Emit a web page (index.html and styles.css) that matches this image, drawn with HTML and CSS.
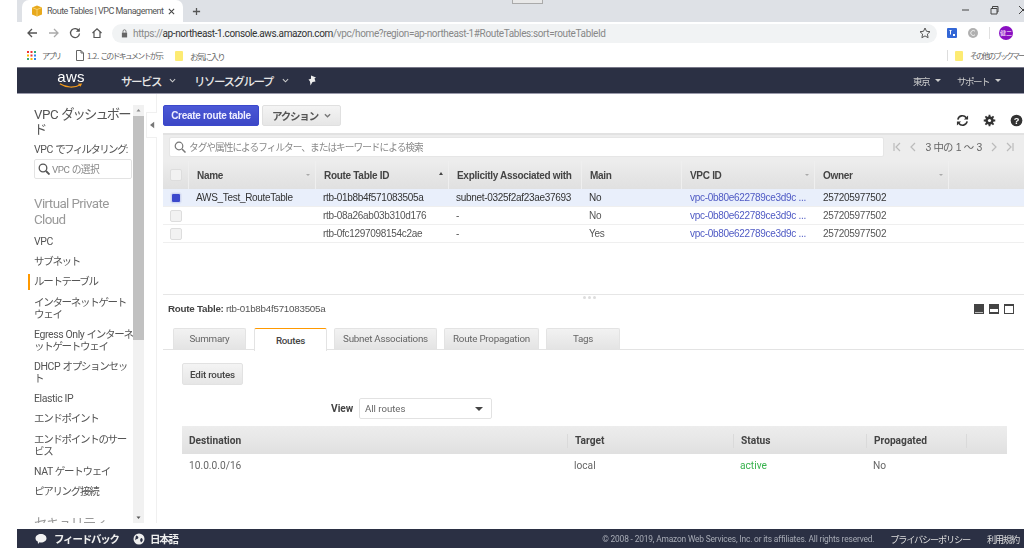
FILE: index.html
```html
<!DOCTYPE html>
<html lang="ja">
<head>
<meta charset="utf-8">
<title>Route Tables | VPC Management Console</title>
<link rel="stylesheet" href="styles.css">
</head>
<body>
<div class="page">
  <div class="tabstrip">
    <div class="tab">
      <svg class="favicon" viewBox="0 0 12 12"><path d="M6 .5 11 2.500v7L6 11.500 1 9.500v-7z" fill="#e8a91c"/><path d="M6 4.500v7M1 2.500l5 2 5-2" stroke="#fbe08c" stroke-width=".7" fill="none"/></svg>
      <span class="tab-title">Route Tables | VPC Management</span>
      <svg class="tab-x" viewBox="0 0 8 8"><path d="M1 1l6 6M7 1 1 7" stroke="#444" stroke-width="1.200"/></svg>
    </div>
    <svg class="newtab" viewBox="0 0 10 10"><path d="M5 1v8M1 5h8" stroke="#555" stroke-width="1.400"/></svg>
    <div class="winbtns">
      <svg class="winbtn" viewBox="0 0 10 10"><path d="M2 5h7" stroke="#444"/></svg>
      <svg class="winbtn" viewBox="0 0 10 10"><path d="M2 3.500h6v5.500H2zM3.500 3.500V1.500h5.500v5.500H8" stroke="#444" fill="none"/></svg>
      <svg class="winbtn" viewBox="0 0 10 10"><path d="M1 1l8 8M9 1 1 9" stroke="#444"/></svg>
    </div>
    <div class="artifact"></div>
  </div>
  <div class="toolbar">
    <svg class="tool" viewBox="0 0 12 12"><path d="M11 6H2M6 2 2 6l4 4" stroke="#555" stroke-width="1.300" fill="none"/></svg>
    <svg class="tool" viewBox="0 0 12 12"><path d="M1 6h9M6 2l4 4-4 4" stroke="#aaa" stroke-width="1.300" fill="none"/></svg>
    <svg class="tool" viewBox="0 0 12 12"><path d="M10 4a4.500 4.500 0 1 0 .5 2.500" stroke="#555" stroke-width="1.300" fill="none"/><path d="M10.800 .8v4h-4z" fill="#555"/></svg>
    <svg class="tool" viewBox="0 0 12 12"><path d="M1.500 6 6 1.800 10.500 6M3 5v5.500h6V5" stroke="#555" stroke-width="1.200" fill="none"/></svg>
    <div class="omnibox">
      <svg class="lock" viewBox="0 0 8 10"><path d="M1 4h6v5.500H1z" fill="#666"/><path d="M2.300 4V2.500a1.700 1.700 0 0 1 3.400 0V4" stroke="#666" fill="none"/></svg>
      <span class="url">https://<b>ap-northeast-1.console.aws.amazon.com</b>/vpc/home?region=ap-northeast-1#RouteTables:sort=routeTableId</span>
      <svg class="star" viewBox="0 0 12 12"><path d="M6 1l1.500 3.300 3.500.4-2.600 2.400.7 3.600L6 8.900l-3.100 1.800.7-3.600L1 4.700l3.500-.4z" stroke="#555" fill="none"/></svg>
    </div>
    <svg class="ext" viewBox="0 0 10 10"><rect width="10" height="10" rx="1" fill="#3367d6"/><path d="M2.500 2h2v1H4v3.500H3V3h-.5zM6 6h2v2H6z" fill="#fff"/></svg>
    <svg class="ext ext-grey" viewBox="0 0 10 10"><circle cx="5" cy="5" r="5" fill="#b0b0b0"/><path d="M7 3.200A2.500 2.500 0 1 0 7 6.800" stroke="#eee" fill="none"/></svg>
    <div class="tool-sep"></div>
    <div class="avatar">健二</div>
  </div>
  <div class="bookmarks">
    <svg class="apps" viewBox="0 0 9 9"><rect width="2" height="2" fill="#e33"/><rect x="3.500" width="2" height="2" fill="#e33"/><rect x="7" width="2" height="2" fill="#3a7"/><rect y="3.500" width="2" height="2" fill="#fb0"/><rect x="3.500" y="3.500" width="2" height="2" fill="#e33"/><rect x="7" y="3.500" width="2" height="2" fill="#38e"/><rect y="7" width="2" height="2" fill="#3a7"/><rect x="3.500" y="7" width="2" height="2" fill="#fb0"/><rect x="7" y="7" width="2" height="2" fill="#38e"/></svg>
    <span class="bm bm-apps">アプリ</span>
    <svg class="bm-doc" viewBox="0 0 8 11"><path d="M.5.500h4.500l2.500 2.500v7.500h-7zM5 .5V3h2.500" stroke="#666" fill="none"/></svg>
    <span class="bm bm-doc-text"><span class="lat">1.2. </span>このドキュメントが示</span>
    <div class="folder"></div>
    <span class="bm">お気に入り</span>
    <div class="bm-right">
      <div class="bm-sep"></div>
      <div class="folder"></div>
      <span class="bm bm-other">その他のブックマーク</span>
    </div>
  </div>
  <nav class="awsnav">
    <div class="logo">
      <span class="logo-text">aws</span>
      <svg class="smile" viewBox="0 0 28 7"><path d="M1 1c7 4.500 17 5 24 1" stroke="#f59b1c" stroke-width="1.400" fill="none"/><path d="M22 .8l5-.3-2 4z" fill="#f59b1c"/></svg>
    </div>
    <span class="nav-item nav-services">サービス</span><svg class="chev" viewBox="0 0 8 5"><path d="M1 1l3 3 3-3" stroke="#ccc" stroke-width="1.200" fill="none"/></svg>
    <span class="nav-item nav-res">リソースグループ</span><svg class="chev" viewBox="0 0 8 5"><path d="M1 1l3 3 3-3" stroke="#ccc" stroke-width="1.200" fill="none"/></svg>
    <svg class="pin" viewBox="0 0 10 11"><path d="M3 .5l5 2-1.500 1 1 3-3 .5-2 3.500-.5-4-1.500-2 2.500-.8z" fill="#eee"/></svg>
    <div class="nav-right">
      <span class="nav-small">東京</span><span class="caret"></span>
      <span class="nav-small nav-support">サポート</span><span class="caret"></span>
    </div>
  </nav>
  <div class="main">
    <aside class="sidebar">
      <div class="side-scroll">
        <div class="side-title"><span class="lat">VPC </span>ダッシュボー<br>ド</div>
        <div class="side-filter"><span class="lat">VPC </span>でフィルタリング:</div>
        <div class="side-input">
          <svg class="side-search" viewBox="0 0 12 12"><circle cx="5" cy="5" r="3.800" stroke="#555" stroke-width="1.300" fill="none"/><path d="M8 8l3.500 3.500" stroke="#555" stroke-width="1.800"/></svg>
          <span><span class="lat">VPC </span>の選択</span>
        </div>
        <div class="side-head">Virtual Private<br>Cloud</div>
        <a class="side-item si-first"><span class="lat">VPC</span></a>
        <a class="side-item">サブネット</a>
        <a class="side-item active">ルートテーブル</a>
        <a class="side-item">インターネットゲート<br>ウェイ</a>
        <a class="side-item"><span class="lat">Egress Only </span>インターネ<br>ットゲートウェイ</a>
        <a class="side-item"><span class="lat">DHCP </span>オプションセッ<br>ト</a>
        <a class="side-item"><span class="lat">Elastic IP</span></a>
        <a class="side-item">エンドポイント</a>
        <a class="side-item">エンドポイントのサー<br>ビス</a>
        <a class="side-item"><span class="lat">NAT </span>ゲートウェイ</a>
        <a class="side-item">ピアリング接続</a>
        <div class="side-head side-sec">セキュリティ</div>
      </div>
      <div class="scrollbar">
        <svg class="sb-arrow" viewBox="0 0 11 11"><path d="M3.500 6.500 5.500 4l2 2.500z" fill="#888"/></svg>
        <div class="sb-track"><div class="sb-thumb"></div></div>
        <svg class="sb-arrow" viewBox="0 0 11 11"><path d="M3.500 4.500 5.500 7l2-2.500z" fill="#555"/></svg>
      </div>
    </aside>
    <div class="gutter">
      <div class="collapse"><svg viewBox="0 0 6 8"><path d="M5 0v8L0 4z" fill="#777"/></svg></div>
    </div>
    <section class="content">
      <div class="actions">
        <button class="btn-primary">Create route table</button>
        <button class="btn-action">アクション<svg viewBox="0 0 8 5"><path d="M1 1l3 3 3-3" stroke="#777" stroke-width="1.500" fill="none"/></svg></button>
        <div class="top-icons">
          <svg viewBox="0 0 14 14"><path d="M2 6a5 5 0 0 1 9-2M12 8a5 5 0 0 1-9 2" stroke="#333" stroke-width="1.700" fill="none"/><path d="M13 1.500v4.500H8.500zM1 12.500V8h4.500z" fill="#333"/></svg>
          <svg viewBox="0 0 14 14"><circle cx="7" cy="7" r="3.200" stroke="#333" stroke-width="2.600" fill="none"/><path d="M7 .8v12.400M.8 7h12.400M2.600 2.600l8.800 8.800M11.400 2.600l-8.800 8.800" stroke="#333" stroke-width="2"/><circle cx="7" cy="7" r="1.700" fill="#fff"/></svg>
          <svg viewBox="0 0 14 14"><circle cx="7" cy="7" r="6.300" fill="#333"/><text class="help-q" x="7" y="10.500" text-anchor="middle">?</text></svg>
        </div>
      </div>
      <div class="filterbar">
        <div class="search">
          <svg viewBox="0 0 12 12"><circle cx="5" cy="5" r="3.800" stroke="#777" stroke-width="1.200" fill="none"/><path d="M8 8l3.500 3.500" stroke="#777" stroke-width="1.500"/></svg>
          <span>タグや属性によるフィルター、またはキーワードによる検索</span>
        </div>
        <div class="pager">
          <svg viewBox="0 0 8 10"><path d="M1 1v8M7 1 3 5l4 4" stroke="#bbb" stroke-width="1.200" fill="none"/></svg>
          <svg viewBox="0 0 8 10"><path d="M6 1 2 5l4 4" stroke="#bbb" stroke-width="1.200" fill="none"/></svg>
          <span>3 中の 1 ～ 3</span>
          <svg viewBox="0 0 8 10"><path d="M2 1l4 4-4 4" stroke="#bbb" stroke-width="1.200" fill="none"/></svg>
          <svg viewBox="0 0 8 10"><path d="M7 1v8M1 1l4 4-4 4" stroke="#bbb" stroke-width="1.200" fill="none"/></svg>
        </div>
      </div>
      <div class="grid grid-head">
        <div class="cell cell-check"><span class="check"></span></div>
        <div class="cell">Name<i class="sort"></i></div>
        <div class="cell">Route Table ID<i class="sort up"></i></div>
        <div class="cell">Explicitly Associated with</div>
        <div class="cell">Main</div>
        <div class="cell">VPC ID<i class="sort"></i></div>
        <div class="cell">Owner<i class="sort"></i></div>
        <div class="cell"></div>
      </div>
      <div class="grid grid-row selected">
        <div class="cell cell-check"><span class="check on"></span></div>
        <div class="cell">AWS_Test_RouteTable</div>
        <div class="cell">rtb-01b8b4f571083505a</div>
        <div class="cell">subnet-0325f2af23ae37693</div>
        <div class="cell">No</div>
        <div class="cell link">vpc-0b80e622789ce3d9c ...</div>
        <div class="cell owner">257205977502</div>
        <div class="cell"></div>
      </div>
      <div class="grid grid-row">
        <div class="cell cell-check"><span class="check"></span></div>
        <div class="cell"></div>
        <div class="cell">rtb-08a26ab03b310d176</div>
        <div class="cell">-</div>
        <div class="cell">No</div>
        <div class="cell link">vpc-0b80e622789ce3d9c ...</div>
        <div class="cell owner">257205977502</div>
        <div class="cell"></div>
      </div>
      <div class="grid grid-row">
        <div class="cell cell-check"><span class="check"></span></div>
        <div class="cell"></div>
        <div class="cell">rtb-0fc1297098154c2ae</div>
        <div class="cell">-</div>
        <div class="cell">Yes</div>
        <div class="cell link">vpc-0b80e622789ce3d9c ...</div>
        <div class="cell owner">257205977502</div>
        <div class="cell"></div>
      </div>
      <div class="splitter"><span class="dots"><i></i><i></i><i></i></span></div>
      <div class="detail-head">
        <div class="detail-title"><b>Route Table:</b> rtb-01b8b4f571083505a</div>
        <div class="panes">
          <span class="pane p1"></span><span class="pane p2"></span><span class="pane p3"></span>
        </div>
      </div>
      <div class="tabs">
        <a class="dtab t1">Summary</a>
        <a class="dtab t2 current">Routes</a>
        <a class="dtab t3">Subnet Associations</a>
        <a class="dtab t4">Route Propagation</a>
        <a class="dtab t5">Tags</a>
      </div>
      <div class="panel">
        <button class="btn-edit">Edit routes</button>
        <div class="view-row">
          <span class="view-label">View</span>
          <div class="select"><span>All routes</span><i class="select-caret"></i></div>
        </div>
        <div class="rgrid rgrid-head">
          <div>Destination</div><div>Target</div><div>Status</div><div>Propagated</div><div></div>
        </div>
        <div class="rgrid rgrid-row">
          <div>10.0.0.0/16</div><div>local</div><div class="ok">active</div><div>No</div><div></div>
        </div>
      </div>
    </section>
  </div>
  <footer class="footer">
    <svg class="foot-icon" viewBox="0 0 12 12"><path d="M6 1c3 0 5.500 1.800 5.500 4.300S9 9.500 6 9.500c-.6 0-1 0-1.500-.2L3 11l-.2-2.400C1.300 7.800.5 6.700.5 5.300.5 2.800 3 1 6 1z" fill="#f2f2f2"/></svg>
    <span class="foot-link">フィードバック</span>
    <svg class="foot-icon foot-globe" viewBox="0 0 12 12"><circle cx="6" cy="6" r="5.500" fill="#eee"/><path d="M3 2.500c2 .5 3 1.500 2 3-1 1-2.500.5-3 2M8 5c1.500 0 2 1.500 1.500 3L8 9.500 7 7z" fill="#2b3044"/></svg>
    <span class="foot-link foot-lang">日本語</span>
    <div class="foot-right">
      <span class="copy">© 2008 - 2019, Amazon Web Services, Inc. or its affiliates. All rights reserved.</span>
      <span class="foot-legal">プライバシーポリシー</span>
      <span class="foot-legal">利用規約</span>
    </div>
  </footer>
</div>
</body>
</html>
```
FILE: styles.css
```css
* { box-sizing: border-box; }
html, body { margin: 0; padding: 0; width: 1024px; height: 549px; overflow: hidden; background: #fff; }
body { font-family: "Liberation Sans", "Noto Sans CJK JP", sans-serif; color: #444; }
button { font-family: inherit; padding: 0; cursor: pointer; }
a { display: block; }
i { font-style: normal; }
.lat { letter-spacing: -.4px; }

.page { width: 1024px; height: 549px; padding: 0 0 1px 17px; display: flex; flex-direction: column; filter: blur(.5px); }

/* browser chrome */
.tabstrip { position: relative; height: 22px; flex: none; background: #dee1e6; display: flex; align-items: center; padding-left: 5px; }
.tab { width: 161px; height: 22px; background: #fff; border-radius: 7px 7px 0 0; display: flex; align-items: center; padding-left: 9px; }
.favicon { width: 12px; height: 12px; flex: none; }
.tab-title { width: 114px; margin-left: 4px; font: 9px "Roboto", sans-serif; letter-spacing: -.5px; color: #555; white-space: nowrap; flex: none; }
.tab-x { width: 7px; height: 7px; margin-left: 7px; }
.newtab { width: 9px; height: 9px; margin-left: 9px; }
.winbtns { margin-left: auto; display: flex; gap: 19px; margin-right: -4px; padding-bottom: 2px; }
.winbtn { width: 10px; height: 10px; }
.artifact { position: absolute; left: 495px; top: -1px; width: 31px; height: 5px; border: 1px solid #aaa; background: #e8e8e8; }

.toolbar { height: 22px; flex: none; background: #fff; display: flex; align-items: center; padding-left: 9px; }
.tool { width: 12px; height: 12px; margin-right: 9.500px; flex: none; }
.omnibox { width: 825px; height: 19px; background: #f1f3f4; border-radius: 10px; display: flex; align-items: center; padding-left: 9px; flex: none; }
.lock { width: 7px; height: 9px; flex: none; }
.url { margin-left: 5px; font: 10px "Roboto", sans-serif; letter-spacing: -.37px; color: #888; white-space: nowrap; }
.url b { font-weight: 400; color: #333; }
.star { width: 12px; height: 12px; margin-left: auto; margin-right: 6px; }
.ext { width: 10px; height: 10px; flex: none; margin-left: 10px; }
.ext-grey { margin-left: 11px; }
.tool-sep { width: 1px; height: 12px; margin-left: 11px; background: #e0e0e0; }
.avatar { width: 14px; height: 14px; margin-left: 9px; border-radius: 50%; background: #8a0fc2; color: #fff; font-size: 6px; line-height: 14px; text-align: center; }

.bookmarks { height: 23px; flex: none; background: #fff; display: flex; align-items: center; padding-left: 10px; }
.apps { width: 9px; height: 9px; flex: none; }
.bm { font: 8.500px "Noto Sans CJK JP", sans-serif; letter-spacing: -1.700px; color: #666; white-space: nowrap; }
.bm-apps { margin-left: 6px; width: 18px; font-size: 8px; letter-spacing: -2px; }
.bm-doc { width: 8px; height: 11px; margin-left: 16px; flex: none; }
.bm-doc-text { width: 74px; margin-left: 3px; margin-right: 14px; font-size: 8px; letter-spacing: -1.800px; }
.folder { width: 8px; height: 10px; background: #fdeb72; border-radius: 1px; margin-right: 7px; flex: none; }
.bm-right { margin-left: auto; display: flex; align-items: center; overflow: hidden; width: 77px; }
.bm-sep { width: 1px; height: 11px; background: #ddd; margin-right: 7px; flex: none; }
.bm-other { font-size: 8px; letter-spacing: -2px; }

/* AWS nav */
.awsnav { height: 27px; flex: none; background: #2b3044; border-top: 1px solid #778; border-bottom: 1px solid #99a; display: flex; align-items: center; padding-left: 40px; color: #eee; }
.logo { width: 28px; display: flex; flex-direction: column; align-items: center; position: relative; top: -1px; }
.logo-text { font: 15px/12px "Liberation Sans", sans-serif; color: #fff; letter-spacing: .2px; }
.smile { width: 28px; height: 6px; display: block; }
.nav-item { font-size: 11.500px; letter-spacing: -1.500px; font-weight: 500; color: #e6e6e6; white-space: nowrap; }
.nav-services { margin-left: 36px; width: 40px; }
.nav-res { margin-left: 18px; width: 80px; }
.chev { width: 7px; height: 5px; margin-left: 8px; flex: none; }
.pin { width: 10px; height: 11px; margin-left: 19px; }
.nav-right { margin-left: auto; display: flex; align-items: center; padding-right: 23px; }
.nav-small { font-size: 9.500px; letter-spacing: -1.500px; color: #ccc; white-space: nowrap; }
.nav-support { margin-left: 16px; }
.caret { width: 0; height: 0; border: 3px solid transparent; border-top: 3px solid #ccc; border-bottom: 0; margin-left: 6px; }

/* main layout */
.main { flex: 1; min-height: 0; display: flex; }
.sidebar { width: 127px; flex: none; display: flex; padding: 11px 0 6px; }
.side-scroll { width: 116px; overflow: hidden; padding-left: 17px; font-family: "Roboto", "Noto Sans CJK JP", sans-serif; color: #555; }
.side-title { font-size: 13.300px; letter-spacing: -1.900px; line-height: 15px; margin-top: 2px; white-space: nowrap; }
.side-filter { font-size: 10.500px; letter-spacing: -1.650px; line-height: 14px; margin-top: 6px; white-space: nowrap; }
.side-input { width: 98px; height: 20px; margin-top: 2px; border: 1px solid #e3e3e3; border-radius: 2px; display: flex; align-items: center; padding-left: 3px; font-size: 9.800px; letter-spacing: -.6px; color: #888; white-space: nowrap; }
.side-search { width: 12px; height: 12px; margin-right: 2px; flex: none; }
.side-head { font-size: 13.400px; letter-spacing: -.6px; line-height: 15.500px; color: #999; margin-top: 17px; white-space: nowrap; }
.side-sec { margin-top: 18px; letter-spacing: -1.200px; }
.side-item { position: relative; font-size: 10.500px; letter-spacing: -1.300px; line-height: 12px; margin-top: 8.200px; white-space: nowrap; }
.si-first { margin-top: 9px; }
.side-item.active::before { content: ""; position: absolute; left: -6px; top: -2px; width: 2px; height: 16px; background: #f90; }

.scrollbar { width: 11px; flex: none; background: #f1f1f1; display: flex; flex-direction: column; }
.sb-arrow { width: 11px; height: 11px; flex: none; display: block; }
.sb-track { flex: 1; }
.sb-thumb { height: 224px; background: #c1c1c1; }

.gutter { width: 19px; flex: none; position: relative; }
.gutter::after { content: ""; position: absolute; right: 6px; top: 0; bottom: 6px; width: 1px; background: #f0f0f0; }
.collapse { position: absolute; left: 2px; top: 18px; width: 11px; height: 26px; background: #fff; border: 1px solid #f0f0f0; border-right: 0; display: flex; align-items: center; justify-content: center; z-index: 1; }
.collapse svg { width: 5px; height: 8px; }

.content { flex: 1; min-width: 0; display: flex; flex-direction: column; }
.actions { height: 39px; flex: none; padding-top: 11px; display: flex; align-items: flex-start; }
.btn-primary { width: 96px; height: 21px; border: 1px solid #3b48cc; border-radius: 2px; background: linear-gradient(#4b58d6, #3c47c6); color: #eef; font-size: 10px; letter-spacing: -.3px; font-weight: 700; }
.btn-action { width: 79px; height: 21px; margin-left: 3px; border: 1px solid #e0e0e0; border-radius: 2px; background: linear-gradient(#f4f4f4, #e6e6e6); color: #555; font-size: 10.500px; letter-spacing: -1.200px; font-weight: 700; display: flex; align-items: center; justify-content: center; gap: 6px; }
.btn-action svg { width: 7px; height: 5px; }
.top-icons { margin-left: auto; display: flex; gap: 14px; padding: 9px 1px 0 0; }
.top-icons svg { width: 13px; height: 13px; }
.help-q { font: 700 10px "Liberation Sans", sans-serif; fill: #fff; }

.filterbar { height: 28px; flex: none; background: #ededed; border-top: 2px solid #e2e2e2; display: flex; align-items: center; padding: 0 3px 3px 6px; }
.search { width: 715px; height: 20px; background: #fff; border: 1px solid #e6e6e6; border-radius: 2px; display: flex; align-items: center; padding-left: 4px; font-size: 9.700px; letter-spacing: -1px; color: #888; flex: none; white-space: nowrap; }
.search svg { width: 12px; height: 12px; margin-right: 3px; }
.pager { flex: 1; display: flex; align-items: center; justify-content: space-between; padding: 0 7px 0 9px; font-size: 10.400px; letter-spacing: -.8px; word-spacing: 1px; color: #666; white-space: nowrap; }
.pager svg { width: 8px; height: 10px; }

.grid { display: grid; grid-template-columns: 26px 127px 133px 133px 100px 133px 134px 1fr; flex: none; white-space: nowrap; }
.grid-head { height: 28px; background: linear-gradient(#ededed, #e0e0e0); font-size: 10px; letter-spacing: -.3px; font-weight: 700; color: #444; }
.grid-head .cell { position: relative; display: flex; align-items: center; padding-left: 8px; border-right: 1px solid #efefef; }
.grid-head .cell:last-child { border-right: 0; }
.sort { position: absolute; right: 5px; top: 13px; border: 2.500px solid transparent; border-top: 2.500px solid #aaa; border-bottom: 0; }
.sort.up { top: 11px; border-top: 0; border-bottom: 3px solid #444; }
.grid-row { height: 18px; border-bottom: 1px solid #efefef; font-size: 10px; letter-spacing: -.3px; color: #555; }
.grid-row .cell { display: flex; align-items: center; padding-left: 7px; white-space: nowrap; padding-bottom: 1px; }
.grid-row .link, .grid-row .owner { padding-left: 8px; }
.grid-head .cell-check, .grid-row .cell-check { padding: 0; justify-content: center; }
.grid-row.selected { background: #e9effb; color: #333; }
.check { width: 12px; height: 12px; border: 1px solid #ddd; border-radius: 2px; background: #f2f2f2; }
.check.on { background: #3b48cc; border: 1px solid #cfd6f2; outline: 1px solid #dfe5f6; width: 10px; height: 10px; }
.grid-row .link { color: #4f5ac4; }

.splitter { height: 52px; flex: none; border-bottom: 1px solid #e6e6e6; position: relative; }
.dots { position: absolute; left: 420px; bottom: -5px; display: flex; gap: 2px; }
.dots i { width: 3px; height: 3px; border-radius: 50%; background: #ddd; }
.detail-head { height: 33px; flex: none; display: flex; align-items: flex-start; padding: 8px 10px 0 5px; color: #555; }
.detail-title { font-size: 9.800px; letter-spacing: -.25px; line-height: 12px; white-space: nowrap; }
.detail-title b { color: #444; }
.panes { margin-left: auto; display: flex; gap: 5px; padding-top: 1px; }
.pane { width: 10px; height: 10px; background: #444; position: relative; }
.pane::after { content: ""; position: absolute; left: 1px; right: 1px; background: #fff; }
.p1::after { bottom: 1px; height: 1px; background: #bbb; }
.p2::after { bottom: 2px; height: 3px; }
.p3::after { top: 2px; bottom: 1px; }

.tabs { height: 22px; flex: none; border-bottom: 1px solid #e3e3e3; display: flex; padding-left: 10px; }
.dtab { height: 22px; border: 1px solid #e3e3e3; border-bottom: 0; background: linear-gradient(#f2f2f2, #e3e3e3); text-align: center; font: 9.800px/20px "Roboto", sans-serif; letter-spacing: -.25px; color: #666; border-radius: 2px 2px 0 0; white-space: nowrap; }
.t1 { width: 73px; } .t2 { width: 73px; margin-left: 8px; } .t3 { width: 103px; margin-left: 7px; } .t4 { width: 95px; margin-left: 7px; } .t5 { width: 74px; margin-left: 7px; }
.dtab.current { height: 23px; background: #fff; border: 1px solid #e3e3e3; border-top: 1px solid #f90; border-bottom: 0; color: #444; font-weight: 500; line-height: 23px; position: relative; z-index: 1; }

.panel { flex: 1; padding: 13px 0 0 19px; font-family: "Roboto", sans-serif; }
.btn-edit { display: block; width: 61px; height: 22px; border: 1px solid #e2e2e2; border-radius: 2px; background: linear-gradient(#f4f4f4, #e6e6e6); font: 500 9.800px "Roboto", sans-serif; letter-spacing: -.2px; color: #444; }
.view-row { display: flex; align-items: center; margin-top: 13px; padding-left: 149px; }
.view-label { width: 28px; font-weight: 700; font-size: 10.200px; color: #444; }
.select { width: 133px; height: 21px; border: 1px solid #e2e2e2; border-radius: 2px; padding: 0 8px 0 5px; display: flex; align-items: center; justify-content: space-between; font-size: 9.600px; color: #666; }
.select-caret { border: 4px solid transparent; border-top: 4px solid #444; border-bottom: 0; }
.rgrid { display: grid; grid-template-columns: 385px 166px 133px 100px 41px; width: 825px; }
.rgrid > div { padding-left: 7px; }
.rgrid-head { height: 28px; margin-top: 7px; padding-top: 1px; background: linear-gradient(#ededed, #e0e0e0); align-items: center; font-weight: 700; font-size: 10.200px; color: #444; }
.rgrid-head > div { line-height: 14px; min-height: 14px; }
.rgrid-head > div + div { border-left: 1px solid #dadada; }
.rgrid-row { height: 23px; align-items: center; font-size: 10.200px; color: #666; }
.ok { color: #37b24d; }

/* footer */
.footer { height: 19px; flex: none; background: #2b3044; display: flex; align-items: center; padding-left: 18px; color: #eee; }
.foot-icon { width: 12px; height: 12px; flex: none; }
.foot-link { margin-left: 7px; font-size: 10.500px; letter-spacing: -1.200px; font-weight: 700; white-space: nowrap; }
.foot-globe { margin-left: 14px; }
.foot-lang { margin-left: 5px; }
.foot-right { margin-left: auto; display: flex; align-items: center; padding-right: 5px; white-space: nowrap; }
.copy { font: 8.400px "Roboto", sans-serif; letter-spacing: -.17px; color: #a8acb6; margin-right: 16px; }
.foot-legal { font-size: 9.200px; letter-spacing: -1.200px; color: #ddd; margin-left: 17px; }
.copy + .foot-legal { margin-left: 0; }
```
